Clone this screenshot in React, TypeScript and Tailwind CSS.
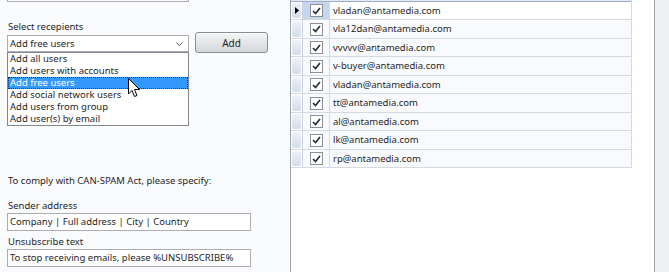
const emails = [
  "vladan@antamedia.com",
  "vla12dan@antamedia.com",
  "vvvvv@antamedia.com",
  "v-buyer@antamedia.com",
  "vladan@antamedia.com",
  "tt@antamedia.com",
  "al@antamedia.com",
  "lk@antamedia.com",
  "rp@antamedia.com",
];

const options = [
  "Add all users",
  "Add users with accounts",
  "Add free users",
  "Add social network users",
  "Add users from group",
  "Add user(s) by email",
];

function Check() {
  return (
    <div className="flex h-[13px] w-[13px] items-center justify-center border border-[#8e8f8f] bg-white">
      <svg width="9" height="8" viewBox="0 0 9 8">
        <path d="M1 4 L3.5 6.5 L8 1" fill="none" stroke="#1f2a3a" strokeWidth="1.6" />
      </svg>
    </div>
  );
}

function Row({ email, i }: { email: string; i: number }) {
  const selected = i === 0;
  return (
    <div className={`flex border-b border-[#d5dae2] ${i % 2 === 0 ? "h-[18px]" : "h-[19px]"}`}>
      <div className="flex w-[12px] shrink-0 items-stretch border-r border-[#c9d1dc] p-px">
        <div className="flex flex-1 items-center justify-center rounded-[2px] bg-gradient-to-b from-[#eef2f8] to-[#d3dce9]">
          {selected && (
            <svg width="4" height="7" viewBox="0 0 4 7">
              <path d="M0 0 L4 3.5 L0 7 Z" fill="#000" />
            </svg>
          )}
        </div>
      </div>
      <div
        className={`flex w-[27px] shrink-0 items-center justify-center border-r border-[#d5dae2] ${
          selected ? "bg-[#c6d6ef]" : "bg-[#f8fafd]"
        }`}
      >
        <Check />
      </div>
      <div className={`flex flex-1 items-center pl-[3px] ${selected ? "bg-white" : "bg-[#f8fafd]"}`}>{email}</div>
    </div>
  );
}

export default function App() {
  return (
    <div className="flex h-[272px] w-[669px] overflow-hidden bg-[#fafbfd] font-['Noto_Sans',sans-serif] text-[9.5px] leading-[12px] text-[#252525]">
      {/* left form */}
      <div className="relative w-[290px] shrink-0 pl-[7px]">
        <div className="-mt-[16px] h-[18px] w-[182px] border border-[#abadb3] bg-white" />

        <div className="mt-[19px] pl-px">Select recepients</div>
        <div className="flex items-start">
          <div className="mt-[2px] flex h-[17px] w-[182px] items-center justify-between border border-[#abadb3] bg-white pl-[2px] pr-[5px]">
            <span>Add free users</span>
            <svg width="7" height="4" viewBox="0 0 7 4">
              <path d="M0.5 0.5 L3.5 3.5 L6.5 0.5" fill="none" stroke="#555" strokeWidth="1" />
            </svg>
          </div>
          <button className="-mt-px ml-[6px] h-[21px] w-[73px] rounded-[3px] border border-[#8a8d92] bg-gradient-to-b from-[#f4f5f7] to-[#d3d6db] text-[10px] text-[#1e1e1e] shadow-[inset_0_1px_0_#fff]">
            Add
          </button>
        </div>

        <div className="mt-[122px] pl-px">To comply with CAN-SPAM Act, please specify:</div>
        <div className="mt-[13px] pl-px">Sender address</div>
        <div className="mt-px flex h-[18px] w-[244px] items-center border border-[#abadb3] bg-white pl-[2px]">
          Company | Full address | City | Country
        </div>
        <div className="mt-[5px] pl-px">Unsubscribe text</div>
        <div className="mt-px flex h-[18px] w-[244px] items-center border border-[#abadb3] bg-white pl-[2px]">
          To stop receiving emails, please %UNSUBSCRIBE%
        </div>

        {/* open dropdown list */}
        <div className="absolute left-[7px] top-[52px] h-[74px] w-[182px] border border-[#828790] bg-white">
          {options.map((o, i) => (
            <div
              key={o}
              className={`h-[12px] pl-[2px] ${
                i === 2 ? "bg-[#3399ff] text-white outline-1 -outline-offset-1 outline-dotted outline-[#0b2f6a]" : ""
              }`}
            >
              {o}
            </div>
          ))}
        </div>

        {/* mouse cursor */}
        <svg className="absolute left-[128px] top-[78px]" width="13" height="20" viewBox="0 0 13 20">
          <path
            d="M0.5 0.5 L0.5 16 L4 12.5 L6.5 18.5 L9 17.5 L6.5 11.5 L11.5 11.5 Z"
            fill="#fff"
            stroke="#000"
            strokeWidth="1"
          />
        </svg>
      </div>

      {/* grid */}
      <div className="w-[365px] shrink-0 border-x border-[#9da3ab] bg-white">
        <div className="w-[341px] border-r border-[#d5dae2]">
          <div className="h-[2px] border-b border-[#9cadc8] bg-[#e3e9f2]" />
          {emails.map((e, i) => (
            <Row key={i} email={e} i={i} />
          ))}
        </div>
      </div>

      <div className="flex-1 bg-[#eef0f3]" />
    </div>
  );
}
